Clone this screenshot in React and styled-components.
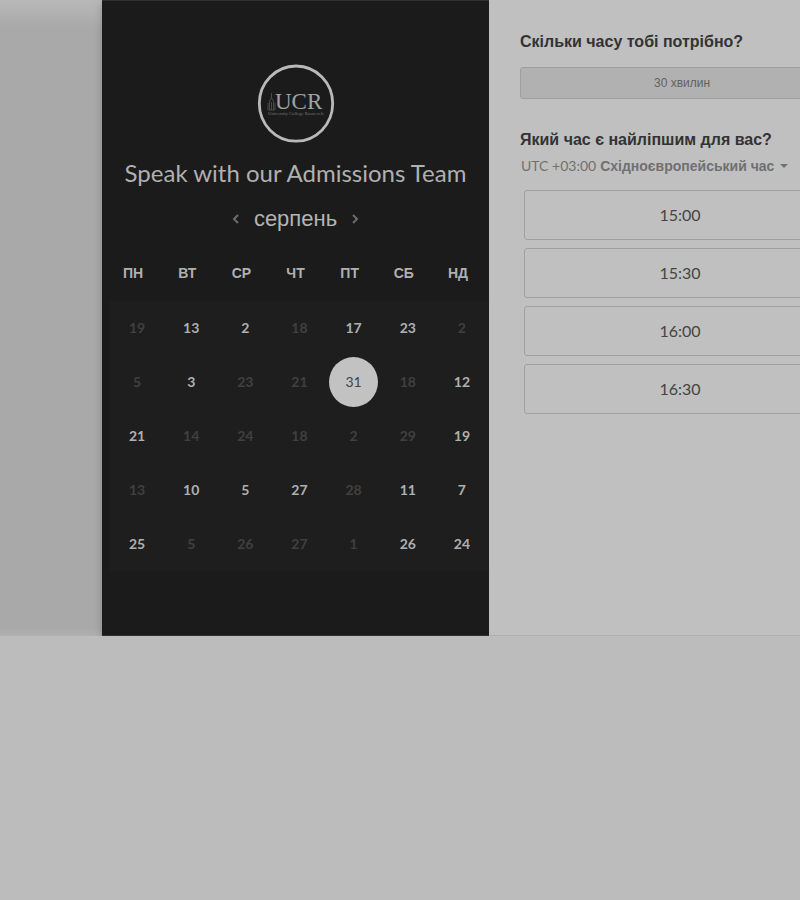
import React, { useState } from "react";
import styled, { createGlobalStyle } from "styled-components";

const latin = '"Lato", "Liberation Sans", sans-serif';
const cyrillic = '"Liberation Sans", Arial, sans-serif';

const GlobalStyle = createGlobalStyle`
  * { box-sizing: border-box; }
  body {
    margin: 0;
    background: #bcbcbc;
    font-family: ${cyrillic};
    overflow-x: hidden;
  }
  button { font: inherit; cursor: pointer; }
`;

const Backdrop = styled.main`
  display: flex;
  padding-left: 102px;
  overflow-x: clip;
  background: linear-gradient(#b8b8b8, #a9a9a9 28px, #a9a9a9 calc(100% - 8px), #b0b0b0);
  box-shadow: 0 2px 8px #b0b0b0;
`;

const Widget = styled.div`
  display: flex;
  flex: 1 0 772px;
`;

const CalendarPanel = styled.section`
  display: flex;
  flex: 0 0 387px;
  flex-direction: column;
  align-items: center;
  padding: 63px 0 64px;
  background: #1b1b1b;
  border: solid #303030;
  border-width: 1px 0;
  box-shadow: 0 3px 8px rgba(0, 0, 0, 0.2);
  color: #bdbdbd;
`;

const Logo = styled.svg`
  display: block;
  width: 78px;
  height: 80px;
`;

const Title = styled.h1`
  margin: 14px 0 0;
  font: 400 24px/30px ${latin};
  white-space: nowrap;
  color: #b0b0b0;
`;

const MonthBar = styled.div`
  display: flex;
  align-items: center;
  gap: 10px;
  margin-top: 15px;
`;

const MonthName = styled.h2`
  margin: 0;
  font: 400 22px/32px ${cyrillic};
  color: #b4b4b4;
`;

const ArrowButton = styled.button`
  display: grid;
  place-items: center;
  width: 16px;
  height: 24px;
  padding: 0;
  border: 0;
  background: none;
  color: #6c6c6c;
`;

const Calendar = styled.table`
  align-self: flex-start;
  margin: 10px 0 0 8px;
  border-collapse: collapse;
  table-layout: fixed;
  width: 379px;
  tbody { background: #1e1e1e; }
`;

const WeekDay = styled.th`
  height: 56px;
  padding: 0 8px 0 0;
  font: 700 14px/20px ${cyrillic};
  color: #b0b0b0;
`;

const DayCell = styled.td`
  height: 54px;
  padding: 0;
`;

const DayButton = styled.button`
  display: grid;
  place-items: center;
  width: 49px;
  height: 50px;
  margin: 0 auto;
  padding: 0;
  border: 0;
  border-radius: 50%;
  font: ${(p) => (p.$selected ? 400 : 700)} 14px/20px ${latin};
  background: ${(p) => (p.$selected ? "#c2c2c2" : "none")};
  color: ${(p) => (p.$selected ? "#444" : p.$dim ? "#404040" : "#b0b0b0")};
`;

const TimePanel = styled.section`
  flex: 1 0 385px;
  padding: 32px 30px 0 31px;
  background: #c0c0c0;
  border-bottom: 1px solid #b0b0b0;
`;

const Question = styled.h2`
  margin: 0;
  font: 700 16px/20px ${cyrillic};
  color: #333;
`;

const DurationButton = styled.button`
  display: block;
  width: 100%;
  height: 32px;
  margin: 15px 0 31px;
  padding: 0;
  border: 1px solid #9f9f9f;
  border-radius: 3px;
  background: #b1b1b1;
  font: 400 12px/16px ${cyrillic};
  color: #616161;
`;

const ZoneButton = styled.button`
  display: flex;
  align-items: center;
  gap: 4px;
  margin: 6px 0 14px;
  padding: 0 1px;
  border: 0;
  background: none;
  font: 400 14px/20px ${latin};
  white-space: nowrap;
  color: #707070;
`;

const ZoneName = styled.span`
  font: 700 14px/20px ${cyrillic};
`;

const Slots = styled.ul`
  display: grid;
  gap: 8px;
  margin: 0;
  padding: 0 8px 0 4px;
  list-style: none;
`;

const SlotButton = styled.button`
  display: block;
  width: 100%;
  height: 50px;
  padding: 0;
  border: 1px solid #a0a0a0;
  border-radius: 3px;
  background: #c0c0c0;
  font: 400 16px/24px ${latin};
  color: #444;
`;

const weekDays = ["ПН", "ВТ", "СР", "ЧТ", "ПТ", "СБ", "НД"];

const weeks = [
  [[19], [13, 1], [2, 1], [18], [17, 1], [23, 1], [2]],
  [[5], [3, 1], [23], [21], [31, 1], [18], [12, 1]],
  [[21, 1], [14], [24], [18], [2], [29], [19, 1]],
  [[13], [10, 1], [5, 1], [27, 1], [28], [11, 1], [7, 1]],
  [[25, 1], [5], [26], [27], [1], [26, 1], [24, 1]],
];

const times = ["15:00", "15:30", "16:00", "16:30"];

function Arrow({ label, d }) {
  return (
    <ArrowButton type="button" aria-label={label}>
      <svg width="8" height="12" viewBox="0 0 8 12" fill="none" stroke="currentColor" strokeWidth="2">
        <path d={d} />
      </svg>
    </ArrowButton>
  );
}

function UcrLogo() {
  return (
    <Logo viewBox="0 0 78 80" role="img" aria-label="UCR">
      <ellipse cx="39" cy="39.6" rx="36.7" ry="37.6" fill="none" stroke="#b9b9b9" strokeWidth="2.8" />
      <g fill="none" stroke="#484848" strokeWidth="1">
        <path d="M14.5 29v6M12.5 46V37l2-3 2 3v9M11 46v-7M18 46v-7M14.5 38v8M11 46h7" />
      </g>
      <text x="18" y="45" fontFamily="Liberation Serif" fontSize="23" fill="#a2a2a2">UCR</text>
      <text x="11" y="51" fontFamily="Liberation Serif" fontSize="4.7" fill="#777">University College Roosevelt</text>
    </Logo>
  );
}

export default function App() {
  const [selected, setSelected] = useState("1-4");
  return (
    <>
      <GlobalStyle />
      <Backdrop>
        <Widget>
          <CalendarPanel>
            <UcrLogo />
            <Title>Speak with our Admissions Team</Title>
            <MonthBar>
              <Arrow label="Попередній місяць" d="M6 2 2 6l4 4" />
              <MonthName>серпень</MonthName>
              <Arrow label="Наступний місяць" d="m2 2 4 4-4 4" />
            </MonthBar>
            <Calendar>
              <thead>
                <tr>
                  {weekDays.map((name) => (
                    <WeekDay key={name} scope="col">{name}</WeekDay>
                  ))}
                </tr>
              </thead>
              <tbody>
                {weeks.map((week, row) => (
                  <tr key={row}>
                    {week.map(([day, open], col) => {
                      const id = `${row}-${col}`;
                      return (
                        <DayCell key={id}>
                          <DayButton
                            type="button"
                            disabled={!open}
                            $dim={!open}
                            $selected={id === selected}
                            aria-pressed={id === selected}
                            onClick={() => setSelected(id)}
                          >
                            {day}
                          </DayButton>
                        </DayCell>
                      );
                    })}
                  </tr>
                ))}
              </tbody>
            </Calendar>
          </CalendarPanel>
          <TimePanel>
            <Question>Скільки часу тобі потрібно?</Question>
            <DurationButton type="button">30 хвилин</DurationButton>
            <Question>Який час є найліпшим для вас?</Question>
            <ZoneButton type="button">
              <span>UTC +03:00</span>
              <ZoneName>Східноєвропейський час</ZoneName>
              <svg width="12" height="6" viewBox="0 0 12 6" aria-hidden="true">
                <path d="M2 1h8L6 5z" fill="currentColor" />
              </svg>
            </ZoneButton>
            <Slots>
              {times.map((time) => (
                <li key={time}>
                  <SlotButton type="button">{time}</SlotButton>
                </li>
              ))}
            </Slots>
          </TimePanel>
        </Widget>
      </Backdrop>
    </>
  );
}
